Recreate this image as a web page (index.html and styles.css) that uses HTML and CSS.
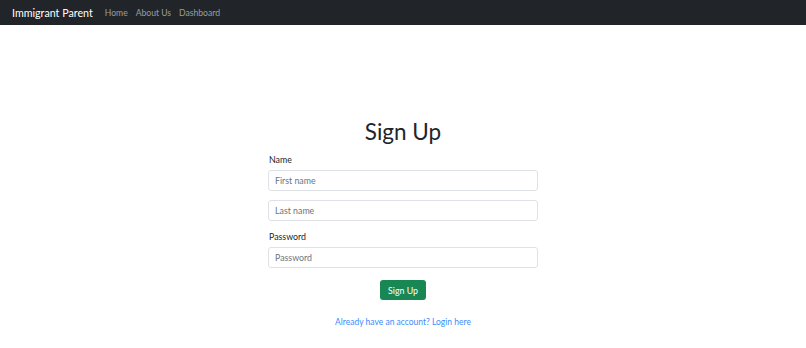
FILE: index.html
```html
<!DOCTYPE html>
<html lang="en">
<head>
    <meta charset="UTF-8">
    <meta name="viewport" content="width=device-width, initial-scale=1.0">
    <title>Sign Up</title>
    <link rel="stylesheet" href="styles.css">
</head>
<body>

    <nav class="navbar">
        <a class="brand" href="#">Immigrant Parent</a>
        <a class="nav-link" href="#">Home</a>
        <a class="nav-link" href="#">About Us</a>
        <a class="nav-link" href="#">Dashboard</a>
    </nav>

    <div class="container">
        <h1>Sign Up</h1>

        <form id="signupForm">
            <div class="form-group">
                <label for="first_name">Name</label>
                <input type="text" id="first_name" name="first_name" placeholder="First name">
            </div>

            <div class="form-group">
                <input type="text" id="last_name" name="last_name" placeholder="Last name">
            </div>

            <div class="form-group">
                <label for="password">Password</label>
                <input type="password" id="password" name="password" placeholder="Password">
            </div>

            <div class="actions">
                <button type="submit">Sign Up</button>
            </div>
        </form>

        <p class="login"><a href="#">Already have an account? Login here</a></p>
    </div>

</body>
</html>
```

FILE: styles.css
```css
body {
    margin: 0;
    font-family: Lato, "Open Sans", sans-serif;
    color: #212529;
    background: #fff;
}

.navbar {
    height: 25px;
    background-color: #212529;
    display: flex;
    align-items: center;
    padding: 0 12px;
}

.navbar a {
    text-decoration: none;
}

.brand {
    color: #fff;
    font-size: 10.7px;
    margin-right: 12px;
}

.nav-link {
    color: rgba(255, 255, 255, 0.55);
    font-size: 8.6px;
    margin-right: 8px;
}

.container {
    width: 270px;
    margin: 0 auto;
    padding-top: 92px;
}

h1 {
    text-align: center;
    font-size: 22.5px;
    font-weight: 400;
    margin: 0 0 7px;
    line-height: 30px;
}

.form-group {
    display: flex;
    flex-direction: column;
    margin-bottom: 9px;
}

.form-group + .form-group label {
    margin-top: 1px;
}

.form-group label {
    font-size: 8.8px;
    padding-left: 1px;
    margin-bottom: 5px;
}

.form-group input {
    height: 21px;
    box-sizing: border-box;
    padding: 0 6px;
    font-family: inherit;
    font-size: 8.8px;
    color: #212529;
    border: 1px solid #dee2e6;
    border-radius: 3px;
}

.form-group input::placeholder {
    color: #6c757d;
}

.actions {
    text-align: center;
    margin-top: 12px;
    line-height: 0;
}

button {
    background-color: #198754;
    color: #fff;
    border: none;
    border-radius: 3px;
    font-family: inherit;
    font-size: 8.8px;
    height: 20px;
    padding: 0 8px;
    cursor: pointer;
}

.login {
    text-align: center;
    font-size: 8.5px;
    margin: 17px 0 0;
}

.login a {
    color: #3d8bfd;
    text-decoration: none;
}
```
